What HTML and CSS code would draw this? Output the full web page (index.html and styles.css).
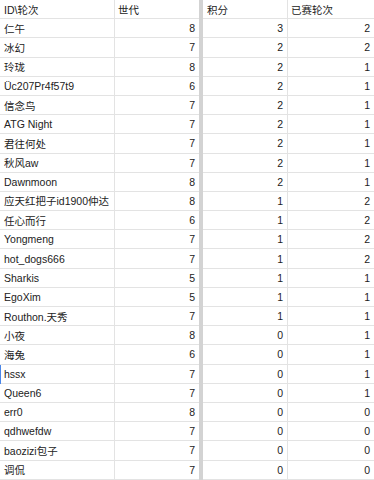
FILE: index.html
```html
<!DOCTYPE html>
<html>
<head>
<meta charset="utf-8">
<link rel="stylesheet" href="styles.css">
</head>
<body>
<div class="sheet">
  <div class="pane pane-left">
    <div class="row head"><div class="cell c1">ID\轮次</div><div class="cell c2">世代</div></div>
    <div class="row"><div class="cell c1">仁午</div><div class="cell c2 num">8</div></div>
    <div class="row"><div class="cell c1">冰幻</div><div class="cell c2 num">7</div></div>
    <div class="row"><div class="cell c1">玲珑</div><div class="cell c2 num">8</div></div>
    <div class="row"><div class="cell c1">Üc207Pr4f57t9</div><div class="cell c2 num">6</div></div>
    <div class="row"><div class="cell c1">信念鸟</div><div class="cell c2 num">7</div></div>
    <div class="row"><div class="cell c1">ATG Night</div><div class="cell c2 num">7</div></div>
    <div class="row"><div class="cell c1">君往何处</div><div class="cell c2 num">7</div></div>
    <div class="row"><div class="cell c1">秋风aw</div><div class="cell c2 num">7</div></div>
    <div class="row"><div class="cell c1">Dawnmoon</div><div class="cell c2 num">8</div></div>
    <div class="row"><div class="cell c1">应天红把子id1900仲达</div><div class="cell c2 num">8</div></div>
    <div class="row"><div class="cell c1">任心而行</div><div class="cell c2 num">6</div></div>
    <div class="row"><div class="cell c1">Yongmeng</div><div class="cell c2 num">7</div></div>
    <div class="row"><div class="cell c1">hot_dogs666</div><div class="cell c2 num">7</div></div>
    <div class="row"><div class="cell c1">Sharkis</div><div class="cell c2 num">5</div></div>
    <div class="row"><div class="cell c1">EgoXim</div><div class="cell c2 num">5</div></div>
    <div class="row"><div class="cell c1">Routhon.天秀</div><div class="cell c2 num">7</div></div>
    <div class="row"><div class="cell c1">小夜</div><div class="cell c2 num">8</div></div>
    <div class="row"><div class="cell c1">海兔</div><div class="cell c2 num">6</div></div>
    <div class="row selected"><div class="cell c1">hssx</div><div class="cell c2 num">7</div></div>
    <div class="row"><div class="cell c1">Queen6</div><div class="cell c2 num">7</div></div>
    <div class="row"><div class="cell c1">err0</div><div class="cell c2 num">8</div></div>
    <div class="row"><div class="cell c1">qdhwefdw</div><div class="cell c2 num">7</div></div>
    <div class="row"><div class="cell c1">baozizi包子</div><div class="cell c2 num">7</div></div>
    <div class="row"><div class="cell c1">调侃</div><div class="cell c2 num">7</div></div>
  </div>
  <div class="freeze"></div>
  <div class="pane pane-right">
    <div class="row head"><div class="cell c3">积分</div><div class="cell c4">已赛轮次</div></div>
    <div class="row"><div class="cell c3 num">3</div><div class="cell c4 num">2</div></div>
    <div class="row"><div class="cell c3 num">2</div><div class="cell c4 num">2</div></div>
    <div class="row"><div class="cell c3 num">2</div><div class="cell c4 num">1</div></div>
    <div class="row"><div class="cell c3 num">2</div><div class="cell c4 num">1</div></div>
    <div class="row"><div class="cell c3 num">2</div><div class="cell c4 num">1</div></div>
    <div class="row"><div class="cell c3 num">2</div><div class="cell c4 num">1</div></div>
    <div class="row"><div class="cell c3 num">2</div><div class="cell c4 num">1</div></div>
    <div class="row"><div class="cell c3 num">2</div><div class="cell c4 num">1</div></div>
    <div class="row"><div class="cell c3 num">2</div><div class="cell c4 num">1</div></div>
    <div class="row"><div class="cell c3 num">1</div><div class="cell c4 num">2</div></div>
    <div class="row"><div class="cell c3 num">1</div><div class="cell c4 num">2</div></div>
    <div class="row"><div class="cell c3 num">1</div><div class="cell c4 num">2</div></div>
    <div class="row"><div class="cell c3 num">1</div><div class="cell c4 num">2</div></div>
    <div class="row"><div class="cell c3 num">1</div><div class="cell c4 num">1</div></div>
    <div class="row"><div class="cell c3 num">1</div><div class="cell c4 num">1</div></div>
    <div class="row"><div class="cell c3 num">1</div><div class="cell c4 num">1</div></div>
    <div class="row"><div class="cell c3 num">0</div><div class="cell c4 num">1</div></div>
    <div class="row"><div class="cell c3 num">0</div><div class="cell c4 num">1</div></div>
    <div class="row"><div class="cell c3 num">0</div><div class="cell c4 num">1</div></div>
    <div class="row"><div class="cell c3 num">0</div><div class="cell c4 num">1</div></div>
    <div class="row"><div class="cell c3 num">0</div><div class="cell c4 num">0</div></div>
    <div class="row"><div class="cell c3 num">0</div><div class="cell c4 num">0</div></div>
    <div class="row"><div class="cell c3 num">0</div><div class="cell c4 num">0</div></div>
    <div class="row"><div class="cell c3 num">0</div><div class="cell c4 num">0</div></div>
  </div>
</div>
</body>
</html>
```

FILE: styles.css
```css
html, body {
  margin: 0;
  padding: 0;
  background: #ffffff;
}

.sheet {
  display: flex;
  width: 374px;
  height: 480px;
  overflow: hidden;
  font-family: "Liberation Sans", Arial, "Noto Sans CJK SC", sans-serif;
  font-size: 10.5px;
  color: #222222;
}

.pane {
  display: grid;
  grid-template-rows: repeat(25, 19.2px);
}

.pane-left {
  width: 199px;
}

.pane-right {
  flex: 1;
}

.freeze {
  width: 4px;
  flex: none;
  background: #d3d3d3;
}

.row {
  display: grid;
  box-sizing: border-box;
  border-bottom: 1px solid #e3e3e3;
  position: relative;
}

.pane-left .row {
  grid-template-columns: 115px 84px;
}

.pane-right .row {
  grid-template-columns: 85px 1fr;
}

.cell {
  display: flex;
  align-items: center;
  padding: 0 3px 0 4px;
  white-space: nowrap;
  overflow: hidden;
  box-sizing: border-box;
}

.c1, .c3 {
  border-right: 1px solid #e3e3e3;
}

.c2, .c4 {
  padding-left: 3px;
}

.num {
  justify-content: flex-end;
  padding-right: 4px;
}

.selected::before {
  content: "";
  position: absolute;
  left: 0;
  top: 0;
  bottom: -1px;
  width: 1px;
  background: #4a86e8;
}
```
